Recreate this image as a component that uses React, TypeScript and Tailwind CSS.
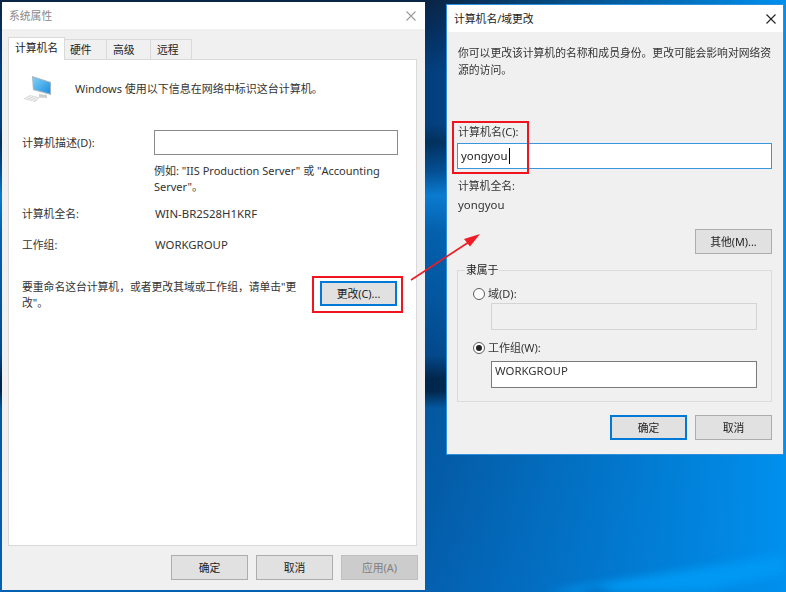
import React from 'react';

const FONT = "font-['Noto_Sans','Noto_Sans_CJK_SC',sans-serif]";

// Latin runs sit a little larger than the CJK text around them, as in Segoe UI
function L({ children }: { children: React.ReactNode }) {
  return <span className="text-[11.4px]">{children}</span>;
}

function DlgButton({ children, focused, disabled }: { children: React.ReactNode; focused?: boolean; disabled?: boolean }) {
  let tone = 'border border-[#adadad] bg-[#e1e1e1] text-[#222]';
  if (focused) tone = 'border-2 border-[#0078d7] bg-[#e1e1e1] text-[#222]';
  if (disabled) tone = 'border border-[#bfbfbf] bg-[#cccccc] text-[#808080]';
  return (
    <button type="button" className={`flex h-[25px] w-[77px] shrink-0 items-center justify-center ${tone}`}>
      {children}
    </button>
  );
}

function CloseIcon({ color }: { color: string }) {
  return (
    <svg width="10" height="10" viewBox="0 0 10 10" fill="none" stroke={color} strokeWidth="1.1">
      <path d="M0.5 0.5 L9.5 9.5 M9.5 0.5 L0.5 9.5" />
    </svg>
  );
}

function PcIcon() {
  return (
    <svg width="30" height="28" viewBox="0 0 30 28">
      <defs>
        <linearGradient id="screen" x1="0" y1="0" x2="1" y2="1">
          <stop offset="0" stopColor="#7fd0f7" />
          <stop offset="1" stopColor="#1c8fe0" />
        </linearGradient>
      </defs>
      <path d="M17 19 L25 20 L25 23 L17 22.5 Z" fill="#cfcfcf" />
      <path d="M10 1 L29 7 L29 20 L11 15 Z" fill="#9fb4c2" />
      <path d="M11 2.5 L28 7.8 L28 18.5 L12 14 Z" fill="url(#screen)" />
      <path d="M1 24 L8 20 L18 22.5 L13 27 Z" fill="#dcdcdc" />
      <path d="M4 24 L10 21 M7 25 L13 22 M10 26 L15.5 23" stroke="#f7f7f7" strokeWidth="0.8" />
    </svg>
  );
}

function Radio({ checked }: { checked?: boolean }) {
  return (
    <span className="flex h-[12px] w-[12px] shrink-0 items-center justify-center rounded-full border border-[#5a5a5a] bg-white">
      {checked && <span className="h-[6px] w-[6px] rounded-full bg-[#222]" />}
    </span>
  );
}

function SystemProps() {
  return (
    <div className="absolute left-[2px] top-[2px] flex h-[588px] w-[423px] flex-col bg-[#f0f0f0] text-[10.8px] leading-[16px] text-[#333]">
      <div className="flex h-[27px] shrink-0 items-center justify-between bg-white pl-[7px] pr-[9px] text-[#8a8a8a]">
        <span>系统属性</span>
        <CloseIcon color="#9a9a9a" />
      </div>
      <div className="ml-[6px] mt-[8px] flex h-[22px] items-end">
        <div className="z-10 mb-[-1px] flex h-[23px] w-[57px] items-start justify-center border border-b-0 border-[#d9d9d9] bg-white pt-[2px] text-[#222]">计算机名</div>
        <div className="ml-[-1px] flex h-[20px] w-[43px] items-center border border-b-0 border-[#d9d9d9] pl-[5px] text-[#222]">硬件</div>
        <div className="ml-[-1px] flex h-[20px] w-[45px] items-center border border-b-0 border-[#d9d9d9] pl-[6px] text-[#222]">高级</div>
        <div className="ml-[-1px] flex h-[20px] w-[42px] items-center border border-b-0 border-[#d9d9d9] pl-[6px] text-[#222]">远程</div>
      </div>
      <div className="ml-[6px] mr-[8px] h-[487px] border border-[#d9d9d9] bg-white pl-[13px]">
        <div className="mt-[15px] flex h-[27px] items-center">
          <PcIcon />
          <span className="ml-[23px] text-[11px]">Windows 使用以下信息在网络中标识这台计算机。</span>
        </div>
        <div className="mt-[28px] flex items-center">
          <span className="w-[132px] text-[11px]">计算机描述(D):</span>
          <div className="h-[25px] w-[244px] border border-[#8a8a8a] bg-white" />
        </div>
        <p className="ml-[132px] mt-[8px] w-[240px] text-[11px]">例如: "IIS Production Server" 或 "Accounting Server"。</p>
        <div className="mt-[11px] flex">
          <span className="w-[133px]">计算机全名:</span>
          <L>WIN-BR2S28H1KRF</L>
        </div>
        <div className="mt-[15px] flex">
          <span className="w-[133px]">工作组:</span>
          <L>WORKGROUP</L>
        </div>
        <div className="mt-[26px] flex items-start">
          <p className="w-[298px] pr-[20px]">要重命名这台计算机，或者更改其域或工作组，请单击"更改"。</p>
          <div className="mt-[2px]">
            <DlgButton focused>更改(C)...</DlgButton>
          </div>
        </div>
      </div>
      <div className="ml-[169px] mt-[9px] flex gap-[8px]">
        <DlgButton>确定</DlgButton>
        <DlgButton>取消</DlgButton>
        <DlgButton disabled>应用(A)</DlgButton>
      </div>
    </div>
  );
}

function RenameDialog() {
  return (
    <div className="absolute left-[446px] top-[4px] flex h-[451px] w-[338px] flex-col border border-[#2f8fdc] bg-[#f0f0f0] text-[10.8px] leading-[16px] text-[#333]">
      <div className="flex h-[27px] shrink-0 items-center justify-between bg-white pl-[7px] pr-[7px] text-[#222]">
        <span>计算机名/域更改</span>
        <CloseIcon color="#222" />
      </div>
      <div className="flex flex-1 flex-col px-[10px]">
        <p className="ml-[1px] mt-[12px] w-[316px] leading-[17px]">你可以更改该计算机的名称和成员身份。更改可能会影响对网络资源的访问。</p>
        <div className="ml-[1px] mt-[46px] text-[11px]">计算机名(C):</div>
        <div className="mt-[3px] flex h-[26px] w-[315px] items-center border border-[#3a96dd] bg-white pl-[3px] text-[#222]">
          <L>yongyou</L><span className="ml-[1px] h-[16px] w-px bg-black" />
        </div>
        <div className="ml-[1px] mt-[9px]">计算机全名:</div>
        <div className="ml-[1px] mt-[3px]"><L>yongyou</L></div>
        <div className="mt-[16px] flex justify-end pr-[1px]">
          <DlgButton>其他(M)...</DlgButton>
        </div>
        <fieldset className="mt-[8px] h-[140px] w-[315px] border border-[#dcdcdc] pl-[15px] pr-[14px]">
          <legend className="ml-[-8px] px-[1px] text-[#222]">隶属于</legend>
          <div className="mt-[8px] flex items-center gap-[3px]">
            <Radio />
            <span className="text-[11px]">域(D):</span>
          </div>
          <div className="ml-[18px] mt-[1px] h-[27px] w-[266px] border border-[#d4d4d4] bg-[#f0f0f0]" />
          <div className="mt-[10px] flex items-center gap-[3px]">
            <Radio checked />
            <span className="text-[11px]">工作组(W):</span>
          </div>
          <div className="ml-[18px] mt-[5px] h-[27px] w-[266px] border border-[#7a7a7a] bg-white pl-[3px] pt-[1px]"><L>WORKGROUP</L></div>
        </fieldset>
        <div className="mt-[13px] flex justify-end gap-[8px] pr-[1px]">
          <DlgButton focused>确定</DlgButton>
          <DlgButton>取消</DlgButton>
        </div>
      </div>
    </div>
  );
}

function Arrow() {
  return (
    <svg className="absolute left-[405px] top-[225px]" width="85" height="65" viewBox="405 225 85 65">
      <path d="M411 280 L472 240" stroke="#ee1c25" strokeWidth="1.5" fill="none" />
      <path d="M480 234 L464 239 L470 246.5 Z" fill="#ee1c25" />
    </svg>
  );
}

// light streak of the desktop wallpaper, bottom right
function WallpaperRay() {
  return (
    <svg className="absolute left-[426px] top-[450px] blur-[4px]" width="360" height="142" viewBox="0 0 360 142">
      <path d="M120 142 L360 104 L360 124 L280 142 Z" fill="#0098f2" />
      <path d="M120 150 L230 150 L170 138 Z" fill="#0064b4" />
    </svg>
  );
}

export default function App() {
  return (
    <div
      className={`relative h-[592px] w-[786px] overflow-hidden bg-[linear-gradient(90deg,transparent_55%,#0090ee_100%),linear-gradient(180deg,#0a2545_0%,#052e5e_5%,#033f7d_12%,#033f7d_21%,#02305c_24%,#044f93_29%,#0a7bd0_33%,#0460ad_39%,#03569f_50%,#03488a_60%,#01264a_64%,#01264a_66%,#0458a0_69%,#0460b0_100%)] ${FONT}`}
    >
      <WallpaperRay />
      <div className="absolute inset-0 blur-[0.3px]">
        <SystemProps />
        <RenameDialog />
        {/* red annotation boxes */}
        <div className="absolute left-[312px] top-[276px] h-[37px] w-[91px] border-2 border-[#f0141e]" />
        <div className="absolute left-[452px] top-[121px] h-[53px] w-[77px] border-2 border-[#f0141e]" />
        <Arrow />
      </div>
    </div>
  );
}
